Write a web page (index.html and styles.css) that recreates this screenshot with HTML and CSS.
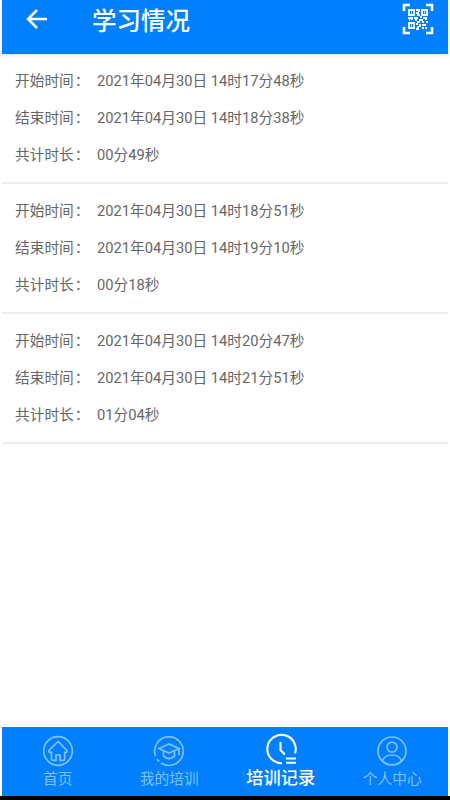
FILE: index.html
```html
<!DOCTYPE html>
<html lang="zh-CN">
<head>
<meta charset="utf-8">
<title>学习情况</title>
<link rel="stylesheet" href="styles.css">
</head>
<body>
<div class="app">
  <header class="header">
    <svg class="back" width="22" height="22" viewBox="0 0 22 22"><path d="M21 11H3M11 2L2 11l9 9"/></svg>
    <h1 class="title">学习情况</h1>
    <svg class="qr" width="32" height="32" viewBox="0 0 32 32">
      <path class="frame" d="M2 8V2h6M24 2h6v6M30 24v6h-6M8 30H2v-6"/>
      <path class="finder" d="M7 7h5v5H7zM20 7h5v5h-5zM7 20h5v5H7z"/>
      <path class="dots" d="M9 9.500h1M22 9.500h1M9 22.500h1M14 7h2M17 6v3M14 10h3M15 12h3M6 15h3M10 14v3M12 15h4M18 14h2M21 15h2M24 14v3M7 17h1M13 17h2M17 17h4M15 19h3M20 19h2M24 19h2M14 21h2M18 21v3M20 22h4M15 24h2M20 25h2M24 24v2M14 26h3"/>
    </svg>
  </header>
  <main class="records">
    <dl class="record">
      <dt>开始时间<span class="colon">：</span></dt><dd>2021年04月30日 14时17分48秒</dd>
      <dt>结束时间<span class="colon">：</span></dt><dd>2021年04月30日 14时18分38秒</dd>
      <dt>共计时长<span class="colon">：</span></dt><dd>00分49秒</dd>
    </dl>
    <dl class="record">
      <dt>开始时间<span class="colon">：</span></dt><dd>2021年04月30日 14时18分51秒</dd>
      <dt>结束时间<span class="colon">：</span></dt><dd>2021年04月30日 14时19分10秒</dd>
      <dt>共计时长<span class="colon">：</span></dt><dd>00分18秒</dd>
    </dl>
    <dl class="record">
      <dt>开始时间<span class="colon">：</span></dt><dd>2021年04月30日 14时20分47秒</dd>
      <dt>结束时间<span class="colon">：</span></dt><dd>2021年04月30日 14时21分51秒</dd>
      <dt>共计时长<span class="colon">：</span></dt><dd>01分04秒</dd>
    </dl>
  </main>
  <nav class="tabs">
    <a class="tab">
      <svg width="32" height="32" viewBox="0 0 32 32"><circle cx="16" cy="16" r="14.300"/><path d="M16 6.500l-9 9q-.8 1.800 1 1.800h1.500V24q0 1.300 1.200 1.300H14v-5.500h4v5.500h3.500q1.200 0 1.200-1.300v-6.700H24q1.800 0 1-1.800z"/></svg>
      <span>首页</span>
    </a>
    <a class="tab">
      <svg width="32" height="32" viewBox="0 0 32 32"><path d="M8 28A14.300 14.300 0 1 0 2.500 21M4 24l2 2.500M16 9L6 13.500l10 4.500 10-4.500zM10.500 16v5q5.500 5 11 0v-5M26 13.500V20"/></svg>
      <span>我的培训</span>
    </a>
    <a class="tab active">
      <svg width="32" height="32" viewBox="0 0 32 32"><path d="M17 30.200A14.200 14.200 0 1 1 30 20.500M15.500 9v8l4.500 4.500M21 25.500h10M21 29.800h10"/></svg>
      <span>培训记录</span>
    </a>
    <a class="tab">
      <svg width="32" height="32" viewBox="0 0 32 32"><circle cx="16" cy="16" r="14"/><circle cx="16" cy="12.200" r="5"/><path d="M6.500 26q2-6 9.500-6t9.500 6"/></svg>
      <span>个人中心</span>
    </a>
  </nav>
</div>
</body>
</html>
```
FILE: styles.css
```css
* { box-sizing: border-box; }
body {
  margin: 0;
  background: #fff;
  font-family: Roboto, "Noto Sans CJK SC", sans-serif;
  border-bottom: 4px solid #000;
}
.app {
  height: 796px;
  margin: 0 2px;
  display: flex;
  flex-direction: column;
}
.header {
  height: 54px;
  padding: 3px 14px 0 24px;
  display: flex;
  align-items: flex-start;
  background: #0080ff;
  box-shadow: 0 1px 3px rgba(0, 0, 0, .15);
}
svg { display: block; fill: none; stroke: currentColor; }
.back { margin-top: 5px; color: #fff; stroke-width: 2.5; }
.title {
  flex: 1;
  margin: 1px 0 0 44px;
  color: #fff;
  font-size: 24.5px;
  line-height: 35px;
  font-weight: 500;
}
.qr { color: #fff; }
.frame { stroke-width: 2.6; }
.finder { stroke-width: 1.8; }
.dots { stroke-width: 2; }
.records { flex: 1; }
.record {
  height: 130px;
  margin: 0;
  padding: 9px 13px 0;
  display: grid;
  grid-template-columns: 82px 1fr;
  grid-auto-rows: 37px;
  border-bottom: 2px solid #ededed;
  color: #666;
  font-size: 14.7px;
  line-height: 37px;
  white-space: nowrap;
}
.record dd { margin: 0; }
.colon { margin-left: 1px; }
.tabs {
  height: 69px;
  display: grid;
  grid-template-columns: repeat(4, 1fr);
  background: #0080ff;
}
.tab {
  display: flex;
  flex-direction: column;
  align-items: center;
  padding-top: 8px;
  color: #80c0ff;
  font-size: 14.7px;
  line-height: 24px;
  stroke-width: 1.7;
}
.active {
  padding-top: 6px;
  color: #fff;
  font-size: 17.2px;
  line-height: 26px;
  font-weight: 500;
  stroke-width: 2.1;
}
```
